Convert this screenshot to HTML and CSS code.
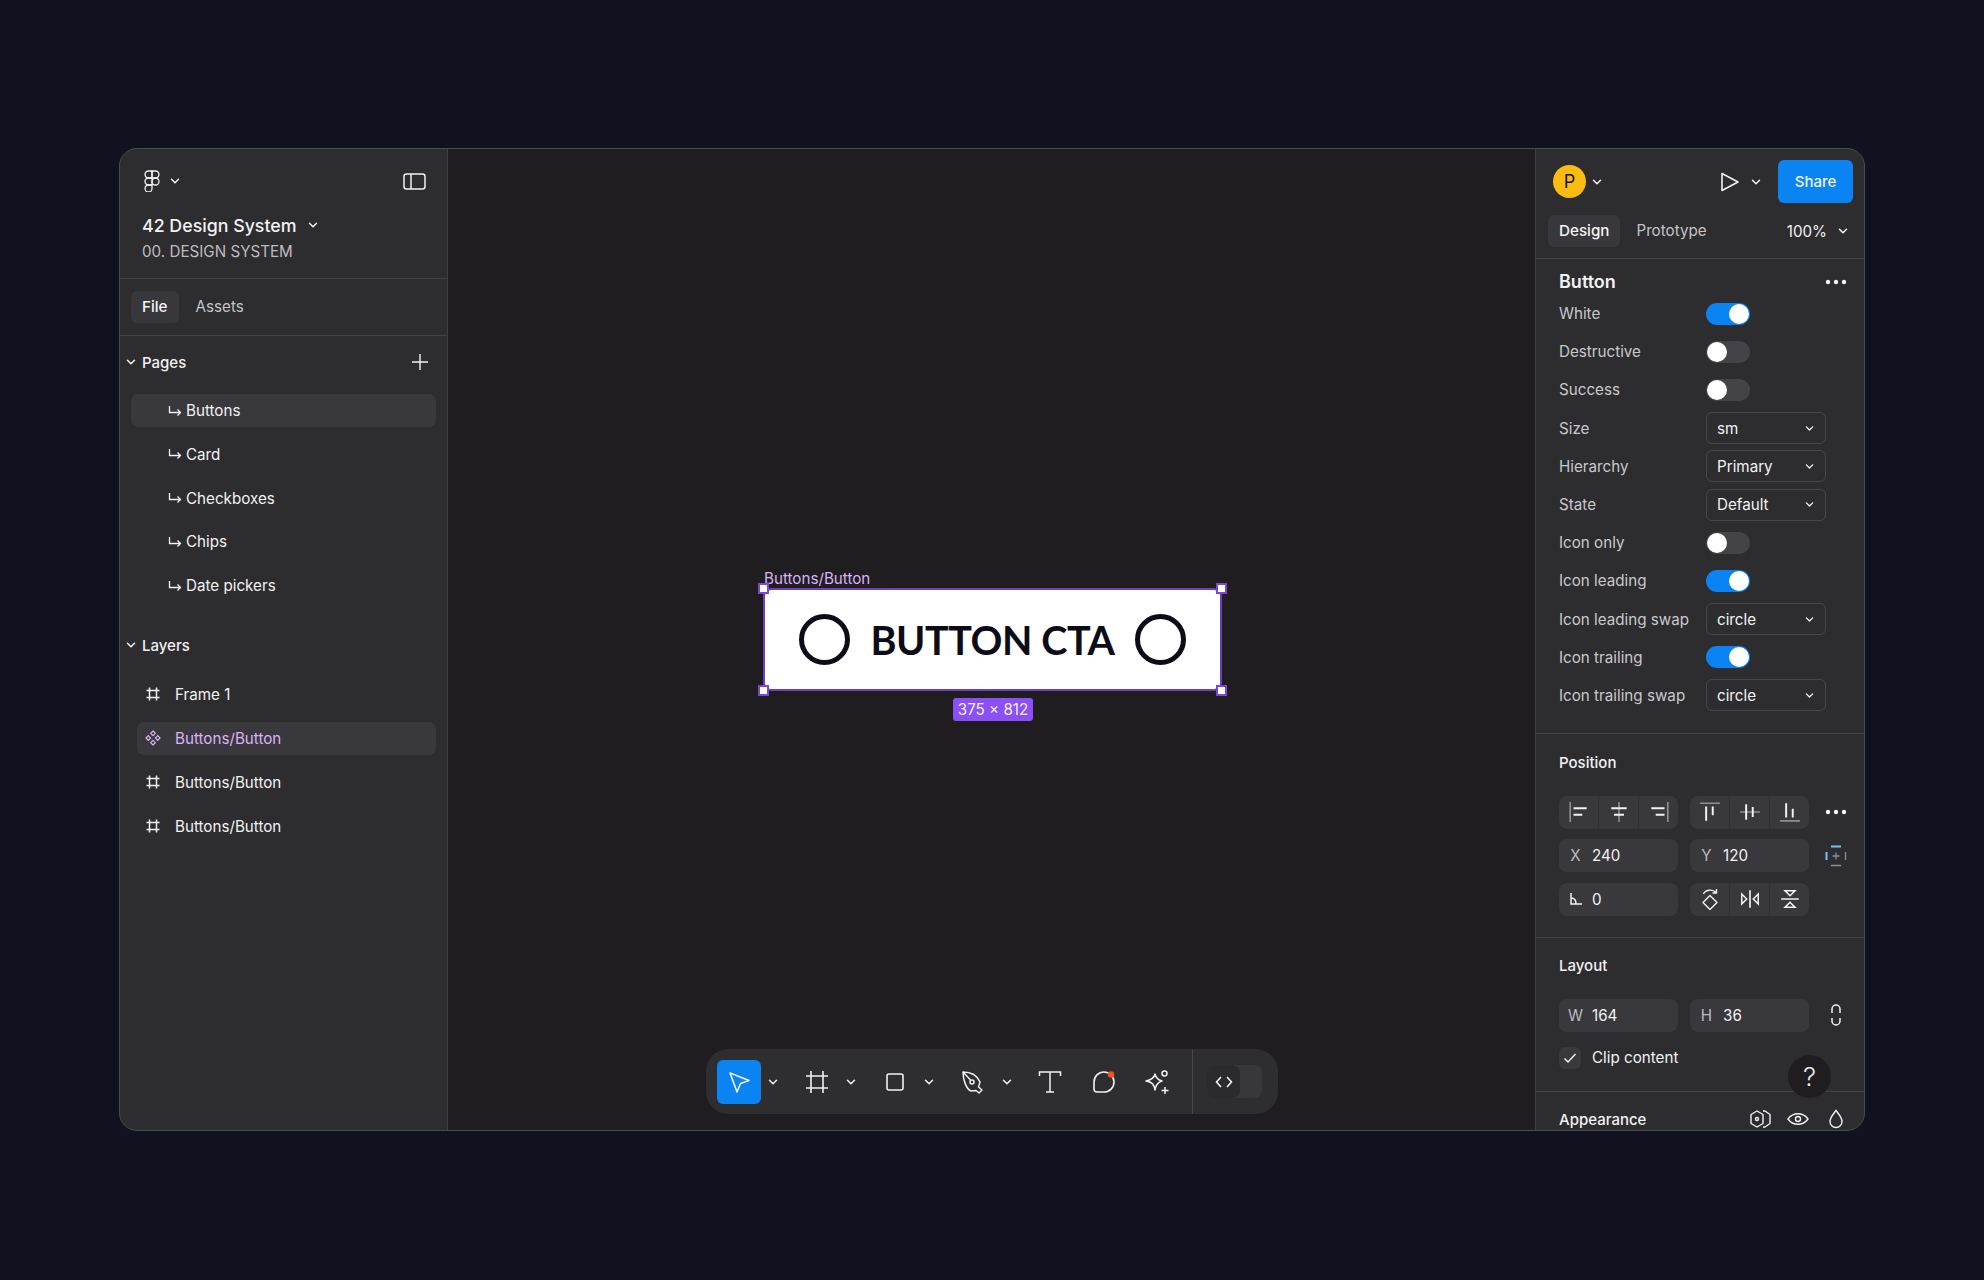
FILE: index.html
```html
<!DOCTYPE html>
<html lang="en">
<head>
    <meta charset="UTF-8">
    <meta name="viewport" content="width=device-width, initial-scale=1.0">
    <title>42 Design System</title>
    <link rel="stylesheet" href="styles.css">
</head>
<body>
    <svg class="sprite" xmlns="http://www.w3.org/2000/svg">
        <symbol id="chev" viewBox="0 0 10 10"><path d="M1.5 3.2 5 6.700l3.500-3.500" fill="none" stroke="currentColor" stroke-width="1.500" stroke-linecap="round" stroke-linejoin="round"/></symbol>
        <symbol id="hook" viewBox="0 0 14 12"><path d="M1.500 1v6.500h11M9.500 4.500l3 3-3 3" fill="none" stroke="currentColor" stroke-width="1.300"/></symbol>
        <symbol id="hash" viewBox="0 0 16 16"><path d="M4.500 1.500v13M11.500 1.500v13M1.500 4.500h13M1.500 11.500h13" fill="none" stroke="currentColor" stroke-width="1.500"/></symbol>
        <symbol id="dots" viewBox="0 0 22 6"><circle cx="3" cy="3" r="2.200" fill="currentColor"/><circle cx="11" cy="3" r="2.200" fill="currentColor"/><circle cx="19" cy="3" r="2.200" fill="currentColor"/></symbol>
    </svg>

    <div class="window">
        <aside class="left-panel">
            <div class="file-head">
                <div class="file-bar">
                    <svg class="figma-logo" viewBox="0 0 16 22" fill="none" stroke="currentColor" stroke-width="1.300">
                        <path d="M8 1H4.500a3.500 3.500 0 0 0 0 7H8z"/>
                        <path d="M8 1h3.500a3.500 3.500 0 0 1 0 7H8z"/>
                        <path d="M8 8H4.500a3.500 3.500 0 0 0 0 7H8z"/>
                        <circle cx="11.500" cy="11.500" r="3.500"/>
                        <path d="M4.500 15H8v3.500a3.500 3.500 0 1 1-3.500-3.500z"/>
                    </svg>
                    <svg class="chev"><use href="#chev"/></svg>
                    <svg class="panel-toggle" viewBox="0 0 23 17" fill="none" stroke="currentColor" stroke-width="1.500">
                        <rect x="1" y="1" width="21" height="15" rx="2.500"/>
                        <path d="M8 1v15"/>
                    </svg>
                </div>
                <div class="file-title">42 Design System <svg class="chev"><use href="#chev"/></svg></div>
                <div class="file-sub">00. DESIGN SYSTEM</div>
            </div>

            <div class="tabs left-tabs">
                <div class="tab active">File</div>
                <div class="tab">Assets</div>
            </div>

            <div class="tree-head first">
                <svg class="chev"><use href="#chev"/></svg>
                <span>Pages</span>
                <svg class="plus" viewBox="0 0 18 18"><path d="M9 1v16M1 9h16" stroke="currentColor" stroke-width="1.400"/></svg>
            </div>
            <div class="tree pages">
                <div class="tree-row page active"><svg class="hook"><use href="#hook"/></svg>Buttons</div>
                <div class="tree-row page"><svg class="hook"><use href="#hook"/></svg>Card</div>
                <div class="tree-row page"><svg class="hook"><use href="#hook"/></svg>Checkboxes</div>
                <div class="tree-row page"><svg class="hook"><use href="#hook"/></svg>Chips</div>
                <div class="tree-row page"><svg class="hook"><use href="#hook"/></svg>Date pickers</div>
            </div>

            <div class="tree-head">
                <svg class="chev"><use href="#chev"/></svg>
                <span>Layers</span>
            </div>
            <div class="tree layers">
                <div class="tree-row layer"><svg class="layer-icon"><use href="#hash"/></svg>Frame 1</div>
                <div class="tree-row layer active">
                    <svg class="layer-icon" viewBox="0 0 16 16" fill="none" stroke="currentColor" stroke-width="1.200">
                        <path d="M8 1l2.300 2.300L8 5.600 5.700 3.300zM8 10.400l2.300 2.300L8 15l-2.300-2.300zM3.300 5.700 5.600 8l-2.300 2.300L1 8zM12.700 5.700 15 8l-2.300 2.300L10.400 8z"/>
                    </svg>Buttons/Button
                </div>
                <div class="tree-row layer"><svg class="layer-icon"><use href="#hash"/></svg>Buttons/Button</div>
                <div class="tree-row layer"><svg class="layer-icon"><use href="#hash"/></svg>Buttons/Button</div>
            </div>
        </aside>

        <main class="canvas">
            <div class="selection">
                <div class="selection-label">Buttons/Button</div>
                <div class="cta">
                    <span class="cta-circle"></span>
                    <span class="cta-text">BUTTON CTA</span>
                    <span class="cta-circle"></span>
                </div>
                <span class="handle tl"></span>
                <span class="handle tr"></span>
                <span class="handle bl"></span>
                <span class="handle br"></span>
                <div class="size-tag">375 × 812</div>
            </div>

            <div class="toolbar">
                <div class="tool select">
                    <svg viewBox="0 0 24 24" fill="none" stroke="currentColor" stroke-width="1.600" stroke-linejoin="round"><path d="M3 3l19 7.500-8.500 3L10 22z"/></svg>
                </div>
                <svg class="chev tool-chev"><use href="#chev"/></svg>
                <div class="tool">
                    <svg viewBox="0 0 24 24" fill="none" stroke="currentColor" stroke-width="1.600"><path d="M6 1v22M18 1v22M1 6h22M1 18h22"/></svg>
                </div>
                <svg class="chev tool-chev"><use href="#chev"/></svg>
                <div class="tool">
                    <svg viewBox="0 0 24 24" fill="none" stroke="currentColor" stroke-width="1.600"><rect x="4" y="4" width="16" height="16" rx="2"/></svg>
                </div>
                <svg class="chev tool-chev"><use href="#chev"/></svg>
                <div class="tool">
                    <svg viewBox="0 0 24 24" fill="none" stroke="currentColor" stroke-width="1.500" stroke-linejoin="round"><path d="M2 2c7 0 14 3 17 10l-1.500 5 3.500 3-3 3-3-2.500-5 .5C5 19 2 9 2 2z"/><path d="M2 2l7.500 8"/><circle cx="11" cy="12" r="2"/></svg>
                </div>
                <svg class="chev tool-chev"><use href="#chev"/></svg>
                <div class="tool type">
                    <svg viewBox="0 0 24 24" fill="none" stroke="currentColor" stroke-width="1.500"><path d="M1.500 6V2h21v4M12 2v20M8 22h8"/></svg>
                </div>
                <div class="tool plain">
                    <svg viewBox="0 0 24 24" fill="none" stroke="currentColor" stroke-width="1.600"><path d="M12 2a10 10 0 0 1 0 20H5a3 3 0 0 1-3-3v-7A10 10 0 0 1 12 2z"/><circle cx="19" cy="4.500" r="3.200" fill="#f4511e" stroke="none"/></svg>
                </div>
                <div class="tool plain ai">
                    <svg viewBox="0 0 26 26" fill="none" stroke="currentColor" stroke-width="1.500" stroke-linejoin="round"><path d="M11 5c1 4 3 6 7 7-4 1-6 3-7 9-1-6-3-8-9-9 6-1 8-3 9-7z"/><circle cx="20.500" cy="4.500" r="2.500"/><path d="M21 18v7M17.500 21.500h7"/></svg>
                </div>
                <div class="code-wrap">
                    <div class="code-toggle">
                        <div class="code-on">
                            <svg viewBox="0 0 18 14" fill="none" stroke="currentColor" stroke-width="1.600"><path d="M6 2 1.500 7 6 12M12 2l4.500 5-4.500 5"/></svg>
                        </div>
                    </div>
                </div>
            </div>
        </main>

        <aside class="right-panel">
            <div class="right-head">
                <div class="user-bar">
                    <div class="avatar">P</div>
                    <svg class="chev"><use href="#chev"/></svg>
                    <svg class="play" viewBox="0 0 20 22" fill="none" stroke="currentColor" stroke-width="1.600" stroke-linejoin="round"><path d="M2 2.500v17L18 11z"/></svg>
                    <svg class="chev"><use href="#chev"/></svg>
                    <div class="share">Share</div>
                </div>
                <div class="tabs right-tabs">
                    <div class="tab active">Design</div>
                    <div class="tab">Prototype</div>
                    <div class="zoom">100% <svg class="chev"><use href="#chev"/></svg></div>
                </div>
            </div>

            <section class="props">
                <div class="props-title">Button <svg class="dots"><use href="#dots"/></svg></div>
                <div class="prop"><span>White</span><i class="switch on"></i></div>
                <div class="prop"><span>Destructive</span><i class="switch"></i></div>
                <div class="prop"><span>Success</span><i class="switch"></i></div>
                <div class="prop"><span>Size</span><div class="select-box">sm<svg class="chev"><use href="#chev"/></svg></div></div>
                <div class="prop"><span>Hierarchy</span><div class="select-box">Primary<svg class="chev"><use href="#chev"/></svg></div></div>
                <div class="prop"><span>State</span><div class="select-box">Default<svg class="chev"><use href="#chev"/></svg></div></div>
                <div class="prop"><span>Icon only</span><i class="switch"></i></div>
                <div class="prop"><span>Icon leading</span><i class="switch on"></i></div>
                <div class="prop"><span>Icon leading swap</span><div class="select-box">circle<svg class="chev"><use href="#chev"/></svg></div></div>
                <div class="prop"><span>Icon trailing</span><i class="switch on"></i></div>
                <div class="prop"><span>Icon trailing swap</span><div class="select-box">circle<svg class="chev"><use href="#chev"/></svg></div></div>
            </section>

            <section class="position">
                <div class="section-title">Position</div>
                <div class="field-grid">
                    <div class="group">
                        <div class="cell"><svg viewBox="0 0 20 20" fill="none"><path d="M2 1v18" stroke="#8f8f92" stroke-width="1.500"/><path d="M5 6.500h12M5 12.500h8" stroke="currentColor" stroke-width="1.800"/></svg></div>
                        <div class="cell"><svg viewBox="0 0 20 20" fill="none"><path d="M10 1v18" stroke="#8f8f92" stroke-width="1.500"/><path d="M3 6.500h14M5.500 12.500h9" stroke="currentColor" stroke-width="1.800"/></svg></div>
                        <div class="cell"><svg viewBox="0 0 20 20" fill="none"><path d="M18 1v18" stroke="#8f8f92" stroke-width="1.500"/><path d="M3 6.500h12M7 12.500h8" stroke="currentColor" stroke-width="1.800"/></svg></div>
                    </div>
                    <div class="group">
                        <div class="cell"><svg viewBox="0 0 20 20" fill="none"><path d="M1 2h18" stroke="#8f8f92" stroke-width="1.500"/><path d="M6.500 5v13M12.500 5v8" stroke="currentColor" stroke-width="1.800"/></svg></div>
                        <div class="cell"><svg viewBox="0 0 20 20" fill="none"><path d="M1 10h18" stroke="#8f8f92" stroke-width="1.500"/><path d="M6.500 3v14M12.500 5.500v9" stroke="currentColor" stroke-width="1.800"/></svg></div>
                        <div class="cell"><svg viewBox="0 0 20 20" fill="none"><path d="M1 18h18" stroke="#8f8f92" stroke-width="1.500"/><path d="M6.500 2v13M12.500 7v8" stroke="currentColor" stroke-width="1.800"/></svg></div>
                    </div>
                    <div class="grid-icon"><svg class="dots"><use href="#dots"/></svg></div>

                    <div class="field"><b>X</b>240</div>
                    <div class="field"><b>Y</b>120</div>
                    <div class="grid-icon">
                        <svg class="constraints" viewBox="0 0 22 22" fill="none"><path d="M6 1.500h10M1.500 7v8" stroke="#74c4f5" stroke-width="2"/><path d="M6 20.500h10M20.500 7v8M11 7.500v7M7.500 11h7" stroke="#8f8f92" stroke-width="1.300"/></svg>
                    </div>

                    <div class="field"><b><svg class="angle" viewBox="0 0 14 14" fill="none" stroke="currentColor" stroke-width="1.500"><path d="M2 1v11h11M2 6c3 0 5 2 5 6"/></svg></b>0</div>
                    <div class="group">
                        <div class="cell"><svg viewBox="0 0 20 22" fill="none" stroke="currentColor" stroke-width="1.400" stroke-linejoin="round"><path d="M10 7.500l7 7-7 7-7-7z"/><path d="M3.500 6C5 2 12 .5 16 4.500M16.500 1v4h-4"/></svg></div>
                        <div class="cell"><svg viewBox="0 0 20 20" fill="none" stroke="currentColor" stroke-width="1.400"><path d="M10 2v16" stroke-width="1.500"/><path d="M2.500 5.500v9L7 10zM17.500 5.500v9L13 10z"/></svg></div>
                        <div class="cell"><svg viewBox="0 0 20 20" fill="none" stroke="currentColor" stroke-width="1.400"><path d="M2 10h16" stroke-width="1.500"/><path d="M5.500 2.500h9L10 7zM5.500 17.500h9L10 13z"/></svg></div>
                    </div>
                    <div class="grid-icon"></div>
                </div>
            </section>

            <section class="layout">
                <div class="section-title">Layout</div>
                <div class="field-grid">
                    <div class="field"><b>W</b>164</div>
                    <div class="field"><b>H</b>36</div>
                    <div class="grid-icon">
                        <svg class="link" viewBox="0 0 12 22" fill="none" stroke="currentColor" stroke-width="1.500"><path d="M2 9V5a4 4 0 0 1 8 0v4M2 14v3a4 4 0 0 0 8 0v-3"/></svg>
                    </div>
                </div>
                <div class="clip-row">
                    <div class="checkbox"><svg viewBox="0 0 14 12" fill="none" stroke="currentColor" stroke-width="1.500"><path d="M1.500 6.500 5 10l7.500-8"/></svg></div>
                    Clip content
                </div>
            </section>

            <section class="appearance">
                <span>Appearance</span>
                <div class="appearance-icons">
                    <svg viewBox="0 0 22 20" fill="none" stroke="currentColor" stroke-width="1.400" stroke-linejoin="round"><path d="M8 2l6 3.500v9L8 18l-6-3.500v-9z"/><circle cx="8" cy="10" r="1.500"/><path d="M14 2h2l5 3.500v9L16 18h-2"/></svg>
                    <svg viewBox="0 0 22 20" fill="none" stroke="currentColor" stroke-width="1.400"><path d="M1 10c5-7 15-7 20 0-5 7-15 7-20 0z"/><circle cx="11" cy="10" r="2.500"/></svg>
                    <svg viewBox="0 0 22 20" fill="none" stroke="currentColor" stroke-width="1.400"><path d="M11 1.500c3 4 6 7 6 11a6 6 0 0 1-12 0c0-4 3-7 6-11z"/></svg>
                </div>
            </section>

            <div class="help">?</div>
        </aside>
    </div>
</body>
</html>
```

FILE: styles.css
```css
* {
    box-sizing: border-box;
}
body {
    margin: 0;
    height: 1280px;
    padding: 148px 0 0 119px;
    overflow: hidden;
    background-color: #10131f;
    color: #f2f2f2;
    font-family: Inter, "Liberation Sans", sans-serif;
    font-size: 15.2px;
}
svg {
    display: block;
    flex: none;
}
.sprite {
    width: 0;
    height: 0;
    position: absolute;
}
.chev {
    width: 10px;
    height: 10px;
}
.window {
    display: flex;
    width: 1746px;
    height: 983px;
    border: 1px solid #4b4b4e;
    border-radius: 18px;
    overflow: hidden;
    background-color: #2d2c2f;
}

/* left panel */
.left-panel {
    width: 328px;
    flex: none;
    border-right: 1px solid #3f3e42;
}
.file-head {
    height: 130px;
    padding: 15px 22px 0;
    border-bottom: 1px solid #434246;
}
.file-bar {
    display: flex;
    align-items: center;
    height: 34px;
    padding-left: 2px;
}
.figma-logo {
    width: 16px;
    height: 22px;
}
.file-bar .chev {
    margin-left: 10px;
}
.panel-toggle {
    width: 23px;
    height: 17px;
    margin-left: auto;
    margin-right: -1px;
}
.file-title {
    display: flex;
    align-items: center;
    gap: 11px;
    height: 24px;
    margin-top: 15px;
    font-size: 17.8px;
    font-weight: 500;
}
.file-sub {
    height: 20px;
    margin-top: 5px;
    line-height: 20px;
    color: #bdbdbf;
}
.tabs {
    display: flex;
    align-items: center;
}
.tab {
    height: 32px;
    padding: 0 11px;
    border-radius: 6px;
    line-height: 32px;
    color: #c4c4c6;
}
.tab.active {
    background-color: #38373b;
    color: #f4f4f4;
    font-weight: 500;
}
.left-tabs {
    height: 57px;
    gap: 6px;
    padding-left: 11px;
    border-bottom: 1px solid #434246;
}
.tree-head {
    display: flex;
    align-items: center;
    gap: 6px;
    height: 52px;
    margin-top: 17px;
    padding-left: 6px;
    font-size: 15px;
    font-weight: 500;
}
.tree-head.first {
    margin-top: 0;
}
.plus {
    width: 18px;
    height: 18px;
    margin-left: auto;
    margin-right: 18px;
}
.tree {
    display: flex;
    flex-direction: column;
    gap: 10.750px;
    margin-top: 6px;
}
.layers {
    gap: 11px;
    margin-top: 6.500px;
}
.tree-row {
    display: flex;
    align-items: center;
    height: 33px;
    margin-right: 11px;
    border-radius: 7px;
}
.tree-row.active {
    background-color: #39383c;
}
.page {
    margin-left: 11px;
    padding-left: 37px;
}
.hook {
    width: 14px;
    height: 12px;
    margin-right: 4px;
}
.layer {
    margin-left: 17px;
    padding-left: 8px;
}
.layer-icon {
    width: 16px;
    height: 16px;
    margin-right: 14px;
}
.layer.active {
    color: #d9b3f5;
}

/* canvas */
.canvas {
    flex: 1;
    position: relative;
    background-color: #1f1d20;
}
.selection {
    position: absolute;
    left: 315px;
    top: 439px;
    width: 459px;
    height: 103px;
    border: 2px solid #6d3fc4;
    border-radius: 8px;
    background-color: #fff;
}
.selection-label {
    position: absolute;
    left: -1px;
    top: -21px;
    line-height: 20px;
    color: #d9b3f5;
    white-space: nowrap;
}
.cta {
    display: flex;
    align-items: center;
    justify-content: center;
    gap: 20px;
    height: 100%;
    color: #0c0c18;
}
.cta-circle {
    width: 51px;
    height: 51px;
    border: 5px solid #0c0c18;
    border-radius: 50%;
}
.cta-text {
    font-family: Lato, sans-serif;
    font-size: 39.500px;
    font-weight: 700;
    letter-spacing: -0.4px;
}
.handle {
    position: absolute;
    width: 11px;
    height: 11px;
    border: 2px solid #7a46d8;
    background-color: #fff;
}
.tl { left: -7px; top: -7px; }
.tr { right: -7px; top: -7px; }
.bl { left: -7px; bottom: -7px; }
.br { right: -7px; bottom: -7px; }
.size-tag {
    position: absolute;
    left: 188px;
    top: 108px;
    width: 80px;
    height: 23px;
    border-radius: 3px;
    background-color: #8b4ff5;
    line-height: 23px;
    text-align: center;
    white-space: nowrap;
}
.toolbar {
    position: absolute;
    left: 258px;
    top: 900px;
    display: flex;
    align-items: center;
    width: 572px;
    height: 65px;
    padding-left: 11px;
    border-radius: 22px;
    background-color: #2e2d30;
}
.tool {
    display: flex;
    align-items: center;
    justify-content: center;
    width: 44px;
    height: 44px;
    margin-left: 17px;
}
.tool svg {
    width: 24px;
    height: 24px;
}
.tool.select {
    margin-left: 0;
    border-radius: 6px;
    background-color: #0a84f2;
}
.tool.type {
    margin-left: 16px;
}
.tool-chev {
    margin-left: 7px;
}
.tool.plain {
    margin-left: 10px;
}
.tool.ai {
    margin-left: 9px;
}
.ai svg {
    width: 26px;
    height: 26px;
}
.code-wrap {
    display: flex;
    align-items: center;
    height: 100%;
    margin-left: 13px;
    padding-left: 14px;
    border-left: 1px solid #47464a;
}
.code-toggle {
    width: 55px;
    height: 33px;
    border-radius: 8px;
    background-color: #38373b;
}
.code-on {
    display: flex;
    align-items: center;
    justify-content: center;
    width: 33px;
    height: 33px;
    border-radius: 8px;
    background-color: #2b2a2d;
}
.code-on svg {
    width: 18px;
    height: 14px;
}

/* right panel */
.right-panel {
    position: relative;
    width: 329px;
    flex: none;
    border-left: 1px solid #3f3e42;
}
.right-head {
    height: 110px;
    padding: 11px 11px 0 12px;
    border-bottom: 1px solid #434246;
}
.user-bar {
    display: flex;
    align-items: center;
    height: 43px;
    padding-left: 5px;
}
.avatar {
    width: 33px;
    height: 33px;
    border-radius: 50%;
    background-color: #fbbc11;
    color: #141414;
    font-size: 18px;
    line-height: 33px;
    text-align: center;
}
.user-bar .chev {
    margin-left: 6px;
}
.play {
    width: 20px;
    height: 22px;
    margin-left: auto;
}
.user-bar .play + .chev {
    margin-left: 11px;
}
.share {
    width: 75px;
    height: 43px;
    margin-left: 17px;
    border-radius: 6px;
    background-color: #0a84f2;
    line-height: 43px;
    text-align: center;
    font-size: 15px;
    font-weight: 500;
}
.right-tabs {
    gap: 5px;
    margin-top: 12px;
}
.zoom {
    display: flex;
    align-items: center;
    gap: 11px;
    margin-left: auto;
    margin-right: 5px;
}
.props {
    height: 475px;
    padding: 9.500px 0 0 23px;
    border-bottom: 1px solid #434246;
}
.props-title {
    display: flex;
    align-items: center;
    justify-content: space-between;
    height: 26px;
    padding-right: 17px;
    font-size: 18px;
    font-weight: 600;
}
.dots {
    width: 22px;
    height: 6px;
}
.prop {
    display: flex;
    align-items: center;
    height: 38.200px;
    color: #c9c9cb;
}
.prop > span {
    width: 147px;
    flex: none;
    white-space: nowrap;
}
.switch {
    position: relative;
    width: 44px;
    height: 22px;
    border-radius: 11px;
    background-color: #444347;
}
.switch::after {
    content: "";
    position: absolute;
    left: 1px;
    top: 1px;
    width: 20px;
    height: 20px;
    border-radius: 50%;
    background-color: #fff;
}
.switch.on {
    background-color: #0a84f2;
}
.switch.on::after {
    left: 23px;
}
.select-box {
    display: flex;
    align-items: center;
    justify-content: space-between;
    width: 120px;
    height: 32px;
    padding: 0 11px 0 10px;
    border: 1px solid #48474b;
    border-radius: 6px;
    color: #f2f2f2;
}
.select-box .chev {
    width: 9px;
    height: 9px;
}
.position {
    height: 204px;
    padding: 17.500px 0 0 23px;
    border-bottom: 1px solid #434246;
}
.section-title {
    height: 22px;
    line-height: 22px;
    font-size: 15px;
    font-weight: 500;
}
.field-grid {
    display: grid;
    grid-template-columns: 119px 119px 29px;
    grid-auto-rows: 33px;
    gap: 10.500px 12px;
    margin-top: 22px;
}
.group {
    display: flex;
    border-radius: 8px;
    background-color: #39383c;
    overflow: hidden;
}
.cell {
    display: flex;
    align-items: center;
    justify-content: center;
    flex: 1;
    border-left: 1px solid #2f2e31;
}
.cell:first-child {
    border-left: none;
}
.cell svg {
    width: 22px;
    height: 22px;
}
.field {
    display: flex;
    align-items: center;
    border-radius: 8px;
    background-color: #39383c;
}
.field b {
    display: flex;
    align-items: center;
    justify-content: center;
    width: 33px;
    font-weight: 400;
    color: #bdbdbf;
}
.angle {
    width: 14px;
    height: 14px;
    color: #f2f2f2;
}
.grid-icon {
    display: flex;
    align-items: center;
    justify-content: center;
}
.constraints {
    width: 22px;
    height: 22px;
}
.link {
    width: 12px;
    height: 22px;
}
.layout {
    height: 154px;
    padding: 16.500px 0 0 23px;
    border-bottom: 1px solid #434246;
}
.clip-row {
    display: flex;
    align-items: center;
    gap: 11px;
    height: 22px;
    margin-top: 15px;
}
.checkbox {
    display: flex;
    align-items: center;
    justify-content: center;
    width: 22px;
    height: 22px;
    border-radius: 6px;
    background-color: #39383c;
}
.checkbox svg {
    width: 14px;
    height: 12px;
}
.appearance {
    display: flex;
    align-items: center;
    justify-content: space-between;
    height: 22px;
    margin-top: 16px;
    padding: 0 17px 0 23px;
    font-size: 15px;
    font-weight: 500;
}
.appearance-icons {
    display: flex;
    gap: 16px;
}
.appearance-icons svg {
    width: 22px;
    height: 20px;
}
.help {
    position: absolute;
    left: 252px;
    top: 906px;
    width: 43px;
    height: 43px;
    border-radius: 50%;
    background-color: #1f1d20;
    font-size: 26px;
    font-weight: 300;
    line-height: 43px;
    text-align: center;
    color: #e8e8e8;
}
```
